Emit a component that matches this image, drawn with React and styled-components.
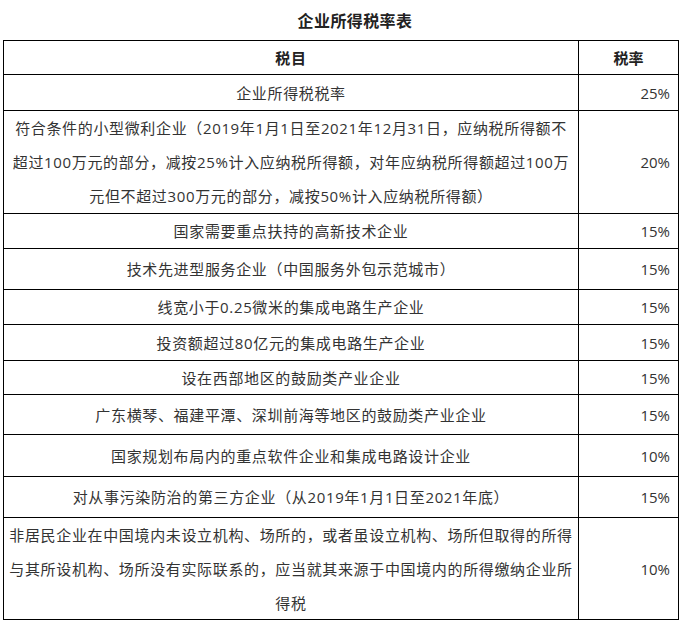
import React from "react";
import styled, { createGlobalStyle } from "styled-components";

const GlobalStyle = createGlobalStyle`
  html, body {
    margin: 0;
    padding: 0;
    background: #fff;
  }
  body {
    font-family: "Open Sans", "Noto Sans CJK SC", sans-serif;
    color: #333;
  }
`;

const rows = [
  { name: ["企业所得税税率"], rate: "25%", h: 36 },
  {
    name: [
      "符合条件的小型微利企业（2019年1月1日至2021年12月31日，应纳税所得额不",
      "超过100万元的部分，减按25%计入应纳税所得额，对年应纳税所得额超过100万",
      "元但不超过300万元的部分，减按50%计入应纳税所得额）",
    ],
    rate: "20%",
    h: 103,
  },
  { name: ["国家需要重点扶持的高新技术企业"], rate: "15%", h: 35 },
  { name: ["技术先进型服务企业（中国服务外包示范城市）"], rate: "15%", h: 41 },
  { name: ["线宽小于0.25微米的集成电路生产企业"], rate: "15%", h: 35 },
  { name: ["投资额超过80亿元的集成电路生产企业"], rate: "15%", h: 36 },
  { name: ["设在西部地区的鼓励类产业企业"], rate: "15%", h: 34 },
  { name: ["广东横琴、福建平潭、深圳前海等地区的鼓励类产业企业"], rate: "15%", h: 40 },
  { name: ["国家规划布局内的重点软件企业和集成电路设计企业"], rate: "10%", h: 42 },
  { name: ["对从事污染防治的第三方企业（从2019年1月1日至2021年底）"], rate: "15%", h: 41 },
  {
    name: [
      "非居民企业在中国境内未设立机构、场所的，或者虽设立机构、场所但取得的所得",
      "与其所设机构、场所没有实际联系的，应当就其来源于中国境内的所得缴纳企业所",
      "得税",
    ],
    rate: "10%",
    h: 102,
  },
];

export default function App() {
  return (
    <Page>
      <GlobalStyle />
      <Title>企业所得税率表</Title>
      <Table>
        <Row h={34}>
          <NameCell head>税目</NameCell>
          <RateCell head>税率</RateCell>
        </Row>
        {rows.map((r, i) => (
          <Row key={i} h={r.h}>
            <NameCell>
              {r.name.map((line, j) => (
                <Line key={j}>{line}</Line>
              ))}
            </NameCell>
            <RateCell>{r.rate}</RateCell>
          </Row>
        ))}
      </Table>
    </Page>
  );
}

const Page = styled.div`
  width: 683px;
  height: 624px;
  box-sizing: border-box;
  padding: 0 4px 0 3px;
`;

const Title = styled.div`
  height: 40px;
  line-height: 42px;
  padding-left: 28px;
  text-align: center;
  font-size: 16px;
  font-weight: 700;
  color: #222;
  letter-spacing: 0.4px;
`;

const Table = styled.div`
  border: 1px solid #000;
  border-bottom: none;
`;

const Row = styled.div`
  display: grid;
  grid-template-columns: 575px 1fr;
  height: ${(p) => p.h}px;
  box-sizing: border-box;
  border-bottom: 1px solid #000;
`;

const NameCell = styled.div`
  display: flex;
  flex-direction: column;
  justify-content: center;
  align-items: center;
  border-right: 1px solid #000;
  font-size: 15px;
  letter-spacing: 0.65px;
  font-weight: ${(p) => (p.head ? 700 : 400)};
  color: ${(p) => (p.head ? "#222" : "#333")};
  white-space: nowrap;
`;

const Line = styled.div`
  line-height: 34px;
`;

const RateCell = styled.div`
  display: flex;
  align-items: center;
  justify-content: ${(p) => (p.head ? "center" : "flex-end")};
  padding-right: ${(p) => (p.head ? 0 : 8)}px;
  font-size: 15px;
  font-weight: ${(p) => (p.head ? 700 : 400)};
  color: ${(p) => (p.head ? "#222" : "#333")};
`;
